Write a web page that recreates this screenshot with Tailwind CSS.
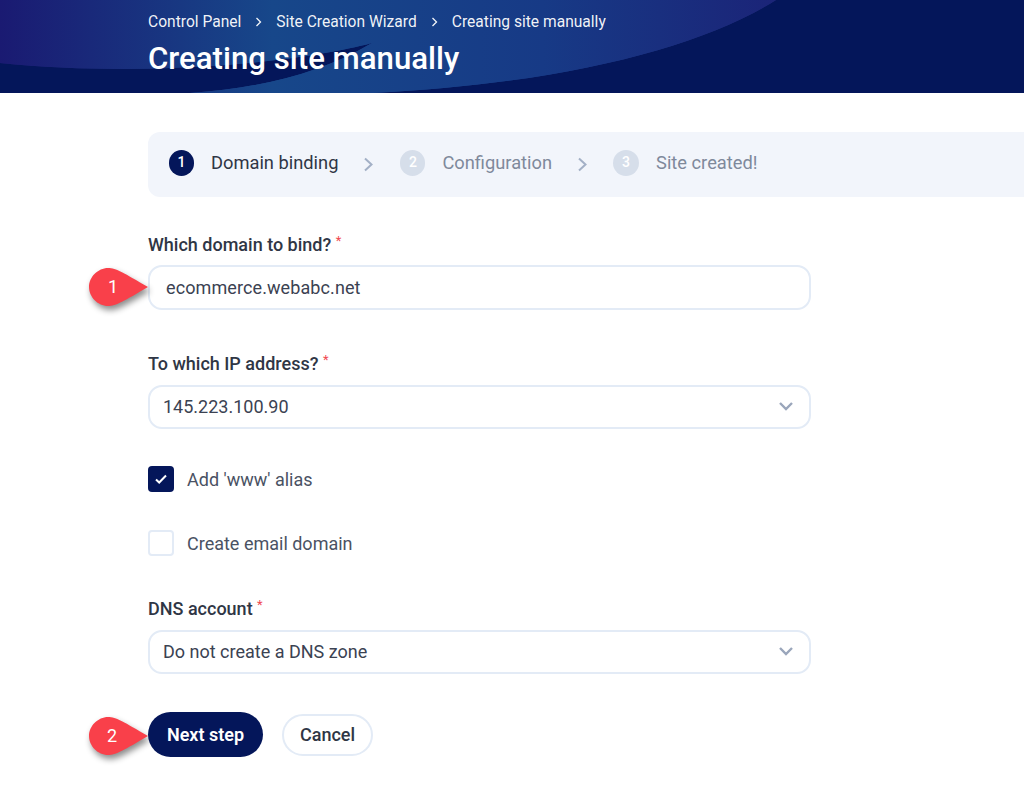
<!DOCTYPE html>
<html lang="en">
<head>
  <meta charset="UTF-8" />
  <meta name="viewport" content="width=device-width, initial-scale=1" />
  <title>Creating site manually</title>
  <script src="https://cdn.jsdelivr.net/npm/@tailwindcss/browser@4"></script>
</head>
<body class="bg-white font-['Roboto',sans-serif] text-[#2f3645] h-[810px] overflow-hidden">
  <!-- Header -->
  <header class="relative h-[93px] bg-[#04165a] overflow-hidden pl-[148px] pt-[13px]">
    <svg class="absolute inset-0" width="1024" height="93" viewBox="0 0 1024 93">
      <defs>
        <linearGradient id="hdr" x1="0" y1="0" x2="1" y2="0">
          <stop offset="0" stop-color="#1a1a72" />
          <stop offset="0.35" stop-color="#17478a" />
          <stop offset="0.7" stop-color="#173a86" />
          <stop offset="1" stop-color="#1b2478" />
        </linearGradient>
      </defs>
      <path d="M0 0H776C700 48 560 84 372 93H190C260 88 320 74 372 43C300 62 150 78 0 63Z" fill="url(#hdr)" />
      <path d="M0 63C150 78 300 62 372 43C320 74 260 88 190 93H372C560 84 700 48 776 0H700C600 30 480 40 372 43Z" fill="url(#hdr)" />
    </svg>
    <nav class="relative flex items-center text-[15.6px] leading-[18px] text-white/95">
      <span>Control Panel</span>
      <svg class="mx-[13px] w-[9px] h-[10px]" viewBox="0 0 9 10" fill="none" stroke="currentColor" stroke-width="1.3"><path d="M2.5 1l4 4-4 4" /></svg>
      <span>Site Creation Wizard</span>
      <svg class="mx-[13px] w-[9px] h-[10px]" viewBox="0 0 9 10" fill="none" stroke="currentColor" stroke-width="1.3"><path d="M2.5 1l4 4-4 4" /></svg>
      <span>Creating site manually</span>
    </nav>
    <h1 class="relative mt-[9px] text-[31.2px] leading-[38px] font-medium text-white">Creating site manually</h1>
  </header>

  <main class="pl-[148px] pt-[39px]">
    <!-- Steps -->
    <div class="flex items-center h-[65px] bg-[#f2f5fb] rounded-l-xl pl-[21px] pb-[4px] text-[18.3px]">
      <span class="w-[25px] h-[26px] rounded-full bg-[#04165a] text-white text-[14px] font-medium flex items-center justify-center">1</span>
      <span class="ml-[17px] text-[#2f3645]">Domain binding</span>
      <svg class="ml-[25px] mt-[3px] w-[11px] h-[15px] text-[#a3b0c6]" viewBox="0 0 11 15" fill="none" stroke="currentColor" stroke-width="2"><path d="M2 1.5l6.5 6-6.5 6" /></svg>
      <span class="ml-[26px] w-[25px] h-[26px] rounded-full bg-[#d6deea] text-white text-[14px] font-medium flex items-center justify-center">2</span>
      <span class="ml-[17px] text-[#7f899b]">Configuration</span>
      <svg class="ml-[25px] mt-[3px] w-[11px] h-[15px] text-[#a3b0c6]" viewBox="0 0 11 15" fill="none" stroke="currentColor" stroke-width="2"><path d="M2 1.5l6.5 6-6.5 6" /></svg>
      <span class="ml-[25px] w-[26px] h-[26px] rounded-full bg-[#d6deea] text-white text-[14px] font-medium flex items-center justify-center">3</span>
      <span class="ml-[17px] text-[#7f899b]">Site created!</span>
    </div>

    <form class="w-[663px]">
      <!-- Domain -->
      <label class="block mt-[37px] text-[18px] leading-[22px] font-medium">Which domain to bind? <sup class="text-[#f0484f] text-[13px] font-normal">*</sup></label>
      <div class="relative mt-[9px]">
        <div class="h-[45px] border-2 border-[#e3ebf6] rounded-[14px] pl-[16px] flex items-center text-[18px] tracking-[0.1px] text-[#3b4252]">ecommerce.webabc.net</div>
        <div class="absolute left-[-60px] top-[2px]">
          <svg width="64" height="44" viewBox="0 0 64 44" class="drop-shadow-[2px_4px_3px_rgba(0,0,0,0.45)]"><path d="M20 1C28 1 36 6 60 20C36 34 28 39 20 39C10 39 1 30 1 20C1 10 10 1 20 1Z" fill="#f9404a" /></svg>
          <span class="absolute left-[20px] top-[9px] text-white text-[18px] leading-[22px]">1</span>
        </div>
      </div>

      <!-- IP -->
      <label class="block mt-[43px] text-[18px] leading-[22px] font-medium">To which IP address? <sup class="text-[#f0484f] text-[13px] font-normal">*</sup></label>
      <div class="mt-[10px] h-[44px] border-2 border-[#e3ebf6] rounded-[14px] pl-[13px] pr-[15px] pb-[2px] flex items-center justify-between text-[18px] text-[#3b4252]">
        <span>145.223.100.90</span>
        <svg class="w-[16px] h-[10px] text-[#9aa6bb]" viewBox="0 0 16 10" fill="none" stroke="currentColor" stroke-width="2.4"><path d="M2 2l6 6 6-6" /></svg>
      </div>

      <!-- Checkboxes -->
      <div class="mt-[37px] flex items-center h-[26px]">
        <span class="w-[26px] h-[26px] rounded-[4px] bg-[#04165a] flex items-center justify-center">
          <svg class="w-[14px] h-[12px]" viewBox="0 0 14 12" fill="none" stroke="#fff" stroke-width="2"><path d="M2 6.5l3.2 3L12 2.5" /></svg>
        </span>
        <span class="ml-[13px] text-[18px] text-[#4a5263]">Add 'www' alias</span>
      </div>
      <div class="mt-[38px] flex items-center h-[26px]">
        <span class="w-[26px] h-[26px] rounded-[4px] border-2 border-[#e3ebf6] bg-white"></span>
        <span class="ml-[13px] text-[18px] text-[#4a5263]">Create email domain</span>
      </div>

      <!-- DNS -->
      <label class="block mt-[42px] text-[18px] leading-[22px] font-medium">DNS account <sup class="text-[#f0484f] text-[13px] font-normal">*</sup></label>
      <div class="mt-[10px] h-[44px] border-2 border-[#e3ebf6] rounded-[14px] pl-[13px] pr-[15px] pb-[2px] flex items-center justify-between text-[18px] text-[#3b4252]">
        <span>Do not create a DNS zone</span>
        <svg class="w-[16px] h-[10px] text-[#9aa6bb]" viewBox="0 0 16 10" fill="none" stroke="currentColor" stroke-width="2.4"><path d="M2 2l6 6 6-6" /></svg>
      </div>

      <!-- Buttons -->
      <div class="relative mt-[38px] flex items-center gap-[19px]">
        <button type="button" class="relative z-10 h-[45px] w-[115px] rounded-full bg-[#04165a] text-white text-[18px] font-semibold">Next step</button>
        <button type="button" class="h-[42px] w-[91px] rounded-full border-2 border-[#e3ebf6] text-[18px] font-medium">Cancel</button>
        <div class="absolute left-[-60px] top-[4px]">
          <svg width="64" height="44" viewBox="0 0 64 44" class="drop-shadow-[2px_4px_3px_rgba(0,0,0,0.45)]"><path d="M20 1C28 1 36 6 60 20C36 34 28 39 20 39C10 39 1 30 1 20C1 10 10 1 20 1Z" fill="#f9404a" /></svg>
          <span class="absolute left-[19px] top-[9px] text-white text-[18px] leading-[22px]">2</span>
        </div>
      </div>
    </form>
  </main>
</body>
</html>
